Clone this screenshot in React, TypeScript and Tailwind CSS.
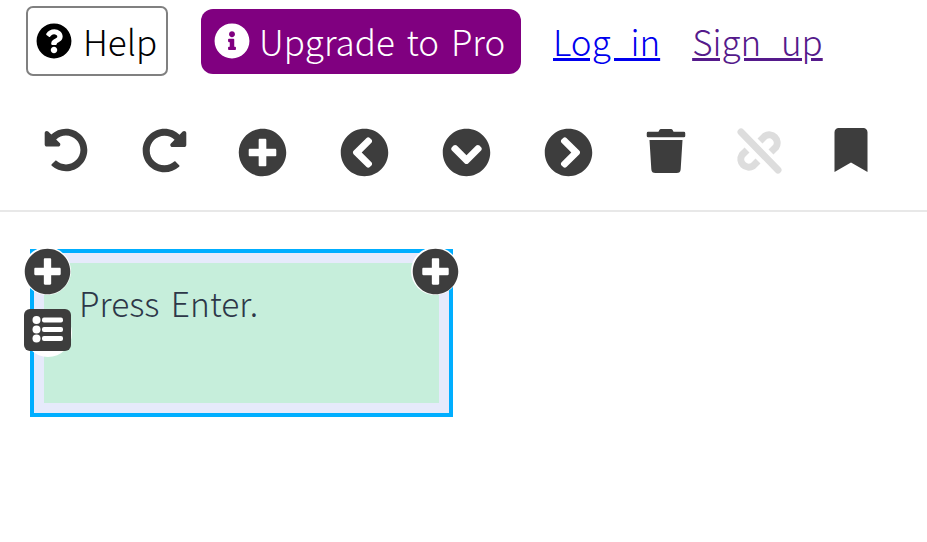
import React from 'react';
import {
  FaQuestionCircle,
  FaInfoCircle,
  FaUndoAlt,
  FaRedoAlt,
  FaPlusCircle,
  FaChevronCircleLeft,
  FaChevronCircleDown,
  FaChevronCircleRight,
  FaTrash,
  FaBookmark,
} from 'react-icons/fa';

const font = "font-['Noto_Sans_CJK_KR','Noto_Sans',sans-serif] font-light";

const UnlinkIcon = () => (
  <svg width="46" height="46" viewBox="0 0 46 46" fill="none" stroke="#dddddd" strokeWidth="7">
    <path d="M24 13 L29 8 A8 8 0 0 1 40 19 L35 24" />
    <path d="M22 33 L17 38 A8 8 0 0 1 6 27 L11 22" />
    <path d="M5 4 L42 42" strokeLinecap="round" />
  </svg>
);

const ListBadge = () => (
  <svg width="47" height="42" viewBox="0 0 47 42">
    <rect width="47" height="42" rx="6" fill="#3d3d3d" />
    <circle cx="12.5" cy="11" r="4" fill="#fff" />
    <circle cx="12.5" cy="20.5" r="4" fill="#fff" />
    <circle cx="12.5" cy="29.5" r="4" fill="#fff" />
    <rect x="18" y="8.5" width="21" height="5" rx="2" fill="#fff" />
    <rect x="18" y="18" width="21" height="5" rx="2" fill="#fff" />
    <rect x="18" y="27" width="21" height="5" rx="2" fill="#fff" />
  </svg>
);

const PlusBadge = ({ className }: { className: string }) => (
  <div className={`absolute w-[48px] h-[48px] rounded-full bg-white flex items-center justify-center ${className}`}>
    <FaPlusCircle size={47} color="#3d3d3d" />
  </div>
);

export default function App() {
  return (
    <div className={`w-[927px] h-[542px] bg-white overflow-hidden ${font}`}>
      <div className="h-[84px] flex items-center pl-[26px] pb-[2px]">
        <button className="w-[142px] h-[70px] border-2 border-[#808080] rounded-[7px] flex items-center pl-[8px] gap-[11px] text-[35px] text-black">
          <FaQuestionCircle size={36} />
          <span>Help</span>
        </button>
        <button className="ml-[33px] w-[320px] h-[65px] rounded-[12px] bg-[#800080] flex items-center pl-[13px] gap-[9px] text-[35px] text-white">
          <FaInfoCircle size={36} />
          <span className="[word-spacing:4px]">Upgrade to Pro</span>
        </button>
        <a href="#" className="ml-[32px] text-[35px] text-[#0000ee] underline [word-spacing:12px]">Log in</a>
        <a href="#" className="ml-[32px] text-[35px] text-[#551a8b] underline [word-spacing:12px]">Sign up</a>
      </div>

      <div className="h-[128px] border-b-2 border-[#e8e8e8] flex items-start pt-[44px] pl-[44px] text-[#3d3d3d]">
        <div className="w-[98px] h-[48px]"><FaUndoAlt size={44} /></div>
        <div className="w-[96px] h-[48px]"><FaRedoAlt size={45} /></div>
        <div className="w-[102px] h-[48px] pt-[1px] flex items-center"><FaPlusCircle size={49} /></div>
        <div className="w-[102px] h-[48px] pt-[1px] flex items-center"><FaChevronCircleLeft size={49} /></div>
        <div className="w-[102px] h-[48px] pt-[1px] flex items-center"><FaChevronCircleDown size={49} /></div>
        <div className="w-[100px] h-[48px] pt-[1px] flex items-center"><FaChevronCircleRight size={49} /></div>
        <div className="w-[92px] h-[48px] pt-[1px]"><FaTrash size={44} /></div>
        <div className="w-[93px] h-[48px]"><UnlinkIcon /></div>
        <div className="h-[48px]"><FaBookmark size={44} /></div>
      </div>

      <div className="pt-[37px] pl-[30px]">
        <div className="relative w-[423px] h-[168px] border-[4px] border-[#00aeff] bg-[#e6eafb] p-[10px]">
          <div className="w-full h-full bg-[#c6eedb] pl-[35px] pt-[16px] text-[33.5px] leading-[48px] text-[#2d3748] [word-spacing:4px]">
            Press Enter.
          </div>
          <PlusBadge className="left-[-11px] top-[-6px]" />
          <PlusBadge className="left-[377px] top-[-6px]" />
          <div className="absolute left-[-10px] top-[56px] w-[48px] h-[48px] rounded-full bg-white" />
          <div className="absolute left-[-10px] top-[56px]"><ListBadge /></div>
        </div>
      </div>
    </div>
  );
}
